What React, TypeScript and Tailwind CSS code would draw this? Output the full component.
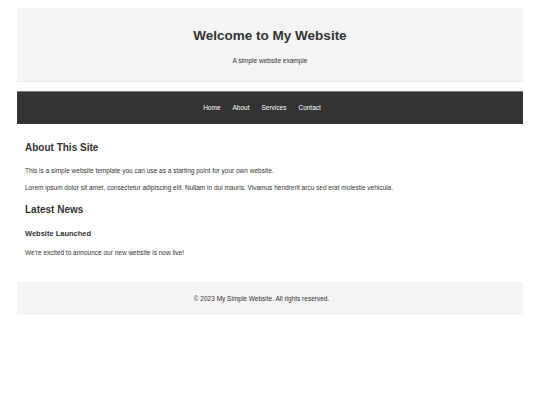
export default function App() {
  const links = ["Home", "About", "Services", "Contact"];

  return (
    <div
      className="min-h-screen bg-white text-[#333]"
      style={{ fontFamily: '"Liberation Sans", Arial, sans-serif' }}
    >
      <div className="mx-[17px] pt-[8px]">
        <header className="h-[74px] bg-[#f4f4f4] border-b border-[#ebebeb] pt-[20px] text-center">
          <h1 className="text-[13.5px] leading-[16px] font-bold">Welcome to My Website</h1>
          <p className="mt-[13px] text-[6.5px] leading-[8px]">A simple website example</p>
        </header>

        <nav className="mt-[9px] h-[33px] bg-[#333] border-t border-[#7a7a7a] flex items-center justify-center gap-[12px] pr-[16px]">
          {links.map((l) => (
            <a key={l} href="#" className="text-white text-[6.5px] leading-[8px]">
              {l}
            </a>
          ))}
        </nav>

        <main className="px-[8px]">
          <h2 className="mt-[18px] text-[10px] leading-[12px] font-bold">About This Site</h2>
          <p className="mt-[13px] text-[6.5px] leading-[8px]">
            This is a simple website template you can use as a starting point for your own website.
          </p>
          <p className="mt-[9px] text-[6.5px] leading-[8px]">
            Lorem ipsum dolor sit amet, consectetur adipiscing elit. Nullam in dui mauris. Vivamus hendrerit arcu sed erat molestie vehicula.
          </p>

          <h2 className="mt-[12px] text-[10px] leading-[12px] font-bold">Latest News</h2>
          <h3 className="mt-[12.5px] text-[7.5px] leading-[9px] font-bold">Website Launched</h3>
          <p className="mt-[11.5px] text-[6.5px] leading-[8px]">
            We're excited to announce our new website is now live!
          </p>
        </main>

        <footer className="mt-[25px] h-[33px] bg-[#f4f4f4] flex items-center justify-center pr-[17px]">
          <p className="text-[6.5px] leading-[8px]">© 2023 My Simple Website. All rights reserved.</p>
        </footer>
      </div>
    </div>
  );
}
